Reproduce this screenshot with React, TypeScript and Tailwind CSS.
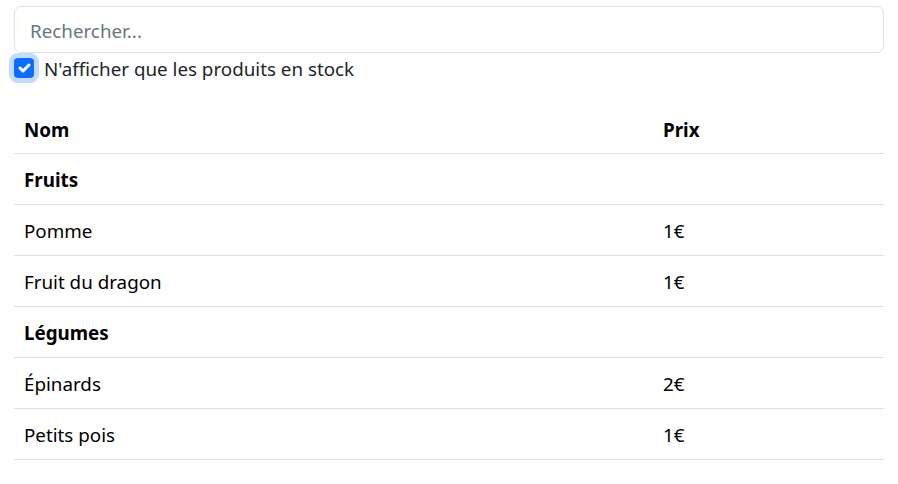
import { useState } from "react";

interface Product {
  category: string;
  name: string;
  price: string;
}

const PRODUCTS: Product[] = [
  { category: "Fruits", name: "Pomme", price: "1€" },
  { category: "Fruits", name: "Fruit du dragon", price: "1€" },
  { category: "Légumes", name: "Épinards", price: "2€" },
  { category: "Légumes", name: "Petits pois", price: "1€" },
];

export default function App() {
  const [query, setQuery] = useState("");
  const [inStock, setInStock] = useState(true);

  const categories = Array.from(new Set(PRODUCTS.map((p) => p.category)));

  return (
    <div
      className="px-[14px] pt-[6px] text-[18.8px] leading-[1.5] text-[#212529] bg-white min-h-screen"
      style={{ fontFamily: '"Noto Sans", sans-serif' }}
    >
      <input
        type="text"
        value={query}
        onChange={(e) => setQuery(e.target.value)}
        placeholder="Rechercher..."
        className="block w-full h-[47px] px-[15px] pt-[2px] border border-[#dee2e6] rounded-[7px] text-[18.8px] placeholder:text-[#6c757d] outline-none"
      />

      {/* Checkbox row */}
      <label className="flex items-center gap-[10px] h-[30px] cursor-pointer">
        <span
          onClick={() => setInStock(!inStock)}
          className={`w-[20px] h-[20px] rounded-[4px] flex items-center justify-center shadow-[0_0_0_5px_rgba(13,110,253,0.25)] ${
            inStock ? "bg-[#0d6efd]" : "bg-white border border-[#dee2e6]"
          }`}
        >
          {inStock && (
            <svg width="20" height="20" viewBox="0 0 20 20" fill="none">
              <path
                d="m6 10 3 3 6-6"
                stroke="white"
                strokeWidth="3"
                strokeLinecap="round"
                strokeLinejoin="round"
              />
            </svg>
          )}
        </span>
        <span className="pt-[2px]">N'afficher que les produits en stock</span>
      </label>

      <table className="w-full mt-[20px] border-collapse">
        <thead>
          <tr className="border-b border-[#dee2e6]">
            <th className="w-[639px] text-left font-bold text-black px-[10px] pt-[4px] h-[50px]">Nom</th>
            <th className="text-left font-bold text-black px-[10px] pt-[4px] h-[50px]">Prix</th>
          </tr>
        </thead>
        <tbody>
          {categories.map((cat) => (
            <>
              <tr key={cat} className="border-b border-[#dee2e6]">
                <th colSpan={2} className="text-left font-bold text-black px-[10px] pt-[4px] h-[51px]">
                  {cat}
                </th>
              </tr>
              {PRODUCTS.filter((p) => p.category === cat).map((p) => (
                <tr key={p.name} className="border-b border-[#dee2e6]">
                  <td className="px-[10px] pt-[4px] h-[51px] text-black">{p.name}</td>
                  <td className="px-[10px] pt-[4px] h-[51px] text-black">{p.price}</td>
                </tr>
              ))}
            </>
          ))}
        </tbody>
      </table>
    </div>
  );
}
